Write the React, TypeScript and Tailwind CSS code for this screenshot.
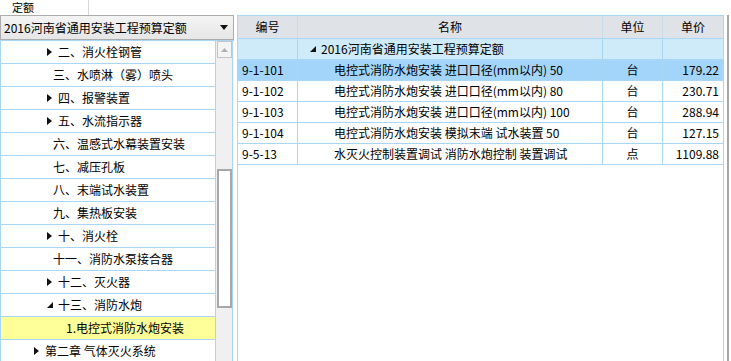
const font = { fontFamily: '"Noto Sans CJK SC", "Noto Sans", sans-serif' };

type TreeItem = { label: string; pad: number; icon?: "closed" | "open"; selected?: boolean };

const tree: TreeItem[] = [
  { label: "二、消火栓钢管", pad: 47, icon: "closed" },
  { label: "三、水喷淋（雾）喷头", pad: 53 },
  { label: "四、报警装置", pad: 47, icon: "closed" },
  { label: "五、水流指示器", pad: 47, icon: "closed" },
  { label: "六、温感式水幕装置安装", pad: 53 },
  { label: "七、减压孔板", pad: 53 },
  { label: "八、末端试水装置", pad: 53 },
  { label: "九、集热板安装", pad: 53 },
  { label: "十、消火栓", pad: 47, icon: "closed" },
  { label: "十一、消防水泵接合器", pad: 53 },
  { label: "十二、灭火器", pad: 47, icon: "closed" },
  { label: "十三、消防水炮", pad: 47, icon: "open" },
  { label: "1.电控式消防水炮安装", pad: 66, selected: true },
  { label: "第二章 气体灭火系统", pad: 34, icon: "closed" },
];

const rows = [
  { code: "9-1-101", name: "电控式消防水炮安装 进口口径(mm以内) 50", unit: "台", price: "179.22", sel: true },
  { code: "9-1-102", name: "电控式消防水炮安装 进口口径(mm以内) 80", unit: "台", price: "230.71" },
  { code: "9-1-103", name: "电控式消防水炮安装 进口口径(mm以内) 100", unit: "台", price: "288.94" },
  { code: "9-1-104", name: "电控式消防水炮安装 模拟末端 试水装置 50", unit: "台", price: "127.15" },
  { code: "9-5-13", name: "水灭火控制装置调试 消防水炮控制 装置调试", unit: "点", price: "1109.88" },
];

function Closed() {
  return (
    <svg width="6" height="8" viewBox="0 0 6 8" className="mr-[5px] shrink-0">
      <path d="M0 0 L5 4 L0 8 Z" fill="#111" />
    </svg>
  );
}

function Open() {
  return (
    <svg width="6" height="6" viewBox="0 0 6 6" className="mr-[5px] shrink-0">
      <path d="M6 0 L6 6 L0 6 Z" fill="#111" />
    </svg>
  );
}

export default function App() {
  return (
    <div className="w-[731px] h-[361px] overflow-hidden bg-white text-[12px] text-black" style={font}>
      {/* Title strip */}
      <div className="flex h-[15px]">
        <div className="flex w-[89px] items-center pl-[12px] border-r border-[#d6d6d6] text-[11px] leading-[15px]">定额</div>
      </div>

      <div className="flex h-[346px]">
        {/* Left panel */}
        <div className="flex w-[234px] flex-col">
          <div className="flex h-[25px] items-center justify-between border border-[#acacac] bg-gradient-to-b from-[#f4f4f4] to-[#e6e6e6] pl-[3px] pr-[5px]">
            <span>2016河南省通用安装工程预算定额</span>
            <svg width="8" height="5" viewBox="0 0 8 5">
              <path d="M0 0 L8 0 L4 5 Z" fill="#111" />
            </svg>
          </div>
          <div className="flex flex-1 border-t border-[#a9d6f5] overflow-hidden">
            <div className="w-[216px] border-l border-r border-[#a9d6f5]">
              {tree.map((t) => (
                <div
                  key={t.label}
                  className={`flex h-[23px] items-center border-b border-[#a9d6f5] ${t.selected ? "bg-[#ffff99]" : ""}`}
                  style={{ paddingLeft: t.pad - 1 }}
                >
                  {t.icon === "closed" && <Closed />}
                  {t.icon === "open" && <Open />}
                  <span>{t.label}</span>
                </div>
              ))}
            </div>
            <div className="flex w-[17px] flex-col border-r border-[#a9d6f5] bg-[#f0f0f0] pl-[1px]">
              <div className="flex h-[17px] items-center justify-center border border-[#c4c4c4] bg-[#f4f4f4]">
                <svg width="7" height="4" viewBox="0 0 7 4">
                  <path d="M0 4 L3.5 0 L7 4 Z" fill="#b0b0b0" />
                </svg>
              </div>
              <div className="h-[111px]" />
              <div className="h-[139px] border-2 border-[#a8a8a8] bg-white" />
            </div>
          </div>
        </div>

        <div className="w-[3px]" />

        {/* Right table */}
        <div className="flex w-[487px] flex-col border-l border-r border-[#a9d6f5]">
          <div className="flex h-[24px] border-t border-b border-[#a9d6f5] bg-[#dfe3e8]">
            <div className="flex w-[60px] items-center justify-center border-r border-[#c9dcea]">编号</div>
            <div className="flex w-[305px] items-center justify-center border-r border-[#c9dcea]">名称</div>
            <div className="flex w-[60px] items-center justify-center border-r border-[#c9dcea]">单位</div>
            <div className="flex w-[60px] items-center justify-center">单价</div>
          </div>
          <div className="flex h-[21px] border-b border-[#a9d6f5] bg-[#cfeaf8]">
            <div className="w-[60px] border-r border-[#a9d6f5]" />
            <div className="flex w-[305px] items-center border-r border-[#a9d6f5] pl-[12px]">
              <Open />
              <span>2016河南省通用安装工程预算定额</span>
            </div>
            <div className="w-[60px] border-r border-[#a9d6f5]" />
            <div className="w-[60px]" />
          </div>
          {rows.map((r) => (
            <div key={r.code} className={`flex h-[21px] border-b border-[#a9d6f5] ${r.sel ? "bg-[#a3d5fb]" : ""}`}>
              <div className="flex w-[60px] items-center border-r border-[#a9d6f5] pl-[4px]">{r.code}</div>
              <div className="flex w-[305px] items-center border-r border-[#a9d6f5] pl-[36px] whitespace-nowrap">{r.name}</div>
              <div className="flex w-[60px] items-center justify-center border-r border-[#a9d6f5]">{r.unit}</div>
              <div className="flex w-[60px] items-center justify-end pr-[4px]">{r.price}</div>
            </div>
          ))}
        </div>

        <div className="w-[3px]" />
        <div className="w-[2px] bg-[#a6a6a6]" />
      </div>
    </div>
  );
}
